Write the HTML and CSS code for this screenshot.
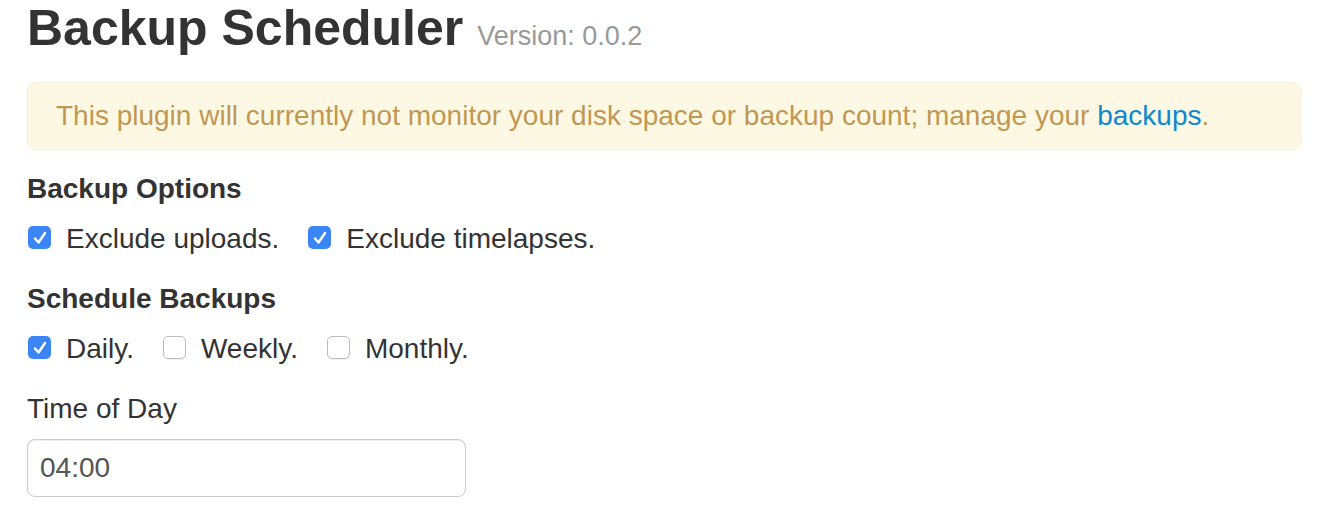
FILE: index.html
```html
<!DOCTYPE html>
<html>
<head>
<meta charset="utf-8">
<link rel="stylesheet" href="styles.css">
</head>
<body>
<div class="page">
  <h1 class="title">Backup Scheduler <small class="version">Version: 0.0.2</small></h1>
  <div class="alert">This plugin will currently not monitor your disk space or backup count; manage your <a href="#" class="link">backups</a>.</div>

  <div class="section-title">Backup Options</div>
  <div class="check-row">
    <label class="check-item"><span class="box checked"><svg viewBox="0 0 23 23" width="23" height="23"><polyline points="7,12.5 10.5,16.5 17,7" fill="none" stroke="#fff" stroke-width="2.4" stroke-linecap="round" stroke-linejoin="round"/></svg></span><span class="check-label">Exclude uploads.</span></label>
    <label class="check-item"><span class="box checked"><svg viewBox="0 0 23 23" width="23" height="23"><polyline points="7,12.5 10.5,16.5 17,7" fill="none" stroke="#fff" stroke-width="2.4" stroke-linecap="round" stroke-linejoin="round"/></svg></span><span class="check-label">Exclude timelapses.</span></label>
  </div>

  <div class="section-title">Schedule Backups</div>
  <div class="check-row">
    <label class="check-item"><span class="box checked"><svg viewBox="0 0 23 23" width="23" height="23"><polyline points="7,12.5 10.5,16.5 17,7" fill="none" stroke="#fff" stroke-width="2.4" stroke-linecap="round" stroke-linejoin="round"/></svg></span><span class="check-label">Daily.</span></label>
    <label class="check-item"><span class="box"></span><span class="check-label">Weekly.</span></label>
    <label class="check-item"><span class="box"></span><span class="check-label">Monthly.</span></label>
  </div>

  <div class="field-label">Time of Day</div>
  <div class="input">04:00</div>
</div>
</body>
</html>
```

FILE: styles.css
```css
html, body {
  margin: 0;
  padding: 0;
  background: #ffffff;
}

body {
  font-family: "Liberation Sans", Arial, Helvetica, sans-serif;
  font-size: 28px;
  line-height: 40px;
  color: #333333;
}

.page {
  padding: 0 41px 0 27px;
}

.title {
  margin: 0;
  font-size: 50px;
  line-height: 56px;
  font-weight: bold;
  color: #333333;
}

.version {
  font-size: 27px;
  line-height: 1;
  font-weight: normal;
  color: #999999;
}

.alert {
  margin-top: 26px;
  margin-bottom: 19px;
  padding: 16px 70px 16px 28px;
  line-height: 34px;
  background: #fcf8e3;
  border: 1px solid #fbeed5;
  border-radius: 8px;
  color: #c09853;
}

.link {
  color: #0d88d1;
  text-decoration: none;
}

.section-title {
  font-weight: bold;
  margin-bottom: 10px;
}

.check-row {
  display: flex;
  align-items: center;
  margin-bottom: 20px;
}

.check-item {
  display: flex;
  align-items: center;
  margin-right: 28px;
}

.box {
  box-sizing: border-box;
  width: 23px;
  height: 23px;
  margin-left: 1px;
  margin-right: 15px;
  margin-top: -3px;
  border-radius: 5px;
  border: 1px solid #bdbdbd;
  background: #ffffff;
  box-shadow: 0 1px 1px rgba(0, 0, 0, 0.06);
  display: flex;
}

.box.checked {
  border: none;
  background: #3b86f6;
  box-shadow: none;
}

.field-label {
  margin-bottom: 10px;
}

.input {
  box-sizing: border-box;
  width: 439px;
  height: 58px;
  padding: 8px 12px;
  line-height: 40px;
  border: 1px solid #cccccc;
  border-radius: 8px;
  color: #555555;
  box-shadow: inset 0 1px 1px rgba(0, 0, 0, 0.075);
}
```
